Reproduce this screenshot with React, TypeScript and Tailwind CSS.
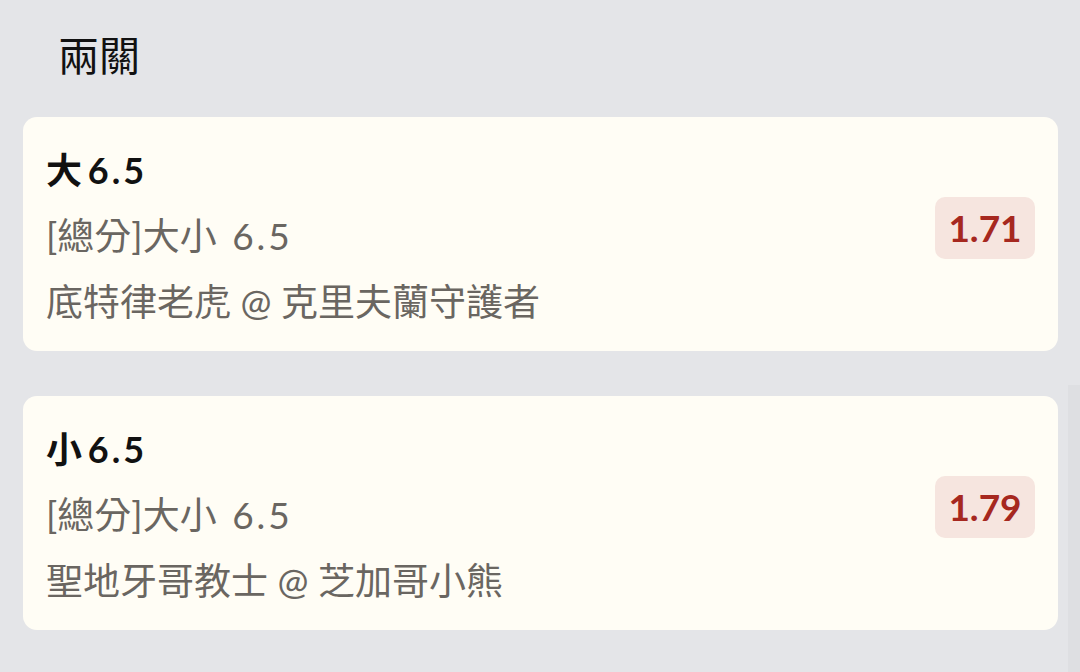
import React from "react";

const font = { fontFamily: 'Lato, "Noto Sans CJK TC", sans-serif' };

type Bet = { label: string; line: string; marketPrefix: string; match: string; odds: string };

const bets: Bet[] = [
  { label: "大", line: "6.5", marketPrefix: "[總分]大小", match: "底特律老虎 @ 克里夫蘭守護者", odds: "1.71" },
  { label: "小", line: "6.5", marketPrefix: "[總分]大小", match: "聖地牙哥教士 @ 芝加哥小熊", odds: "1.79" },
];

function BetCard({ bet }: { bet: Bet }) {
  return (
    <div className="flex items-start justify-between rounded-[14px] bg-[#fffdf5] pl-[23px] pr-[23px] pt-[20px] pb-[16px]">
      <div className="flex flex-col">
        <div className="text-[36px] leading-[66px] font-bold text-[#111111]">
          {bet.label}
          <span className="tracking-[3px] [word-spacing:-6px]"> {bet.line}</span>
        </div>
        <div className="text-[37px] leading-[66px] text-[#6a6661]">
          {bet.marketPrefix}
          <span className="tracking-[3px] [word-spacing:3px]"> {bet.line}</span>
        </div>
        <div className="text-[37px] leading-[66px] text-[#6a6661]">{bet.match}</div>
      </div>
      <div className="mt-[60px] flex h-[62px] w-[100px] items-center justify-center rounded-[10px] bg-[#f6e5df] text-[37px] font-bold text-[#a6281f]">
        {bet.odds}
      </div>
    </div>
  );
}

export default function App() {
  return (
    <div className="relative h-[672px] w-[1080px] overflow-hidden bg-[#e4e5e8]" style={font}>
      <div className="px-[58px] pt-[26px] pb-[31px] text-[41px] leading-[60px] text-[#111111]">兩關</div>
      <div className="flex flex-col gap-[45px] px-[23px] pr-[22px]">
        {bets.map((b, i) => (
          <BetCard key={i} bet={b} />
        ))}
      </div>
      <div className="absolute right-0 top-[385px] bottom-0 w-[12px] bg-[#dedfe2]" />
    </div>
  );
}
